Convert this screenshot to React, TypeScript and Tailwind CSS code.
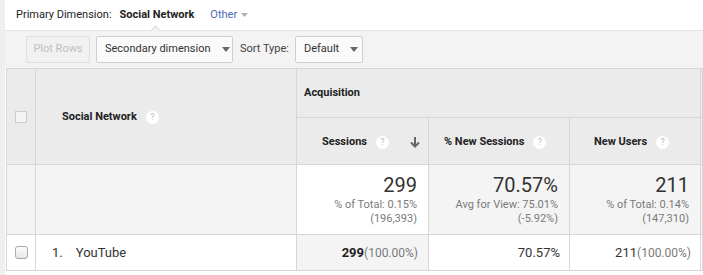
import { ReactNode } from "react";

function Help() {
  return (
    <span className="inline-flex items-center justify-center w-[13px] h-[13px] rounded-full bg-white text-[9px] leading-none text-[#bdbdbd] font-normal ml-[9px]">
      ?
    </span>
  );
}

function Caret({ color = "#666" }: { color?: string }) {
  return (
    <svg width="8" height="5" viewBox="0 0 8 5" className="ml-[11px]">
      <path d="M0 0 L8 0 L4 5 Z" fill={color} />
    </svg>
  );
}

function TotalCell({
  big,
  line1,
  line2,
  className,
}: {
  big: string;
  line1: string;
  line2: string;
  className: string;
}) {
  return (
    <div
      className={`flex flex-col items-end justify-center pr-[11px] border-r border-b border-[#d6d6d6] ${className}`}
    >
      <div className="text-[20px] leading-[22px] text-[#333] mb-[2px]">{big}</div>
      <div className="text-[11px] leading-[14px] text-[#7a7a7a]">{line1}</div>
      <div className="text-[11px] leading-[14px] text-[#7a7a7a]">{line2}</div>
    </div>
  );
}

function Cell({ children, className }: { children?: ReactNode; className: string }) {
  return <div className={`border-r border-b border-[#d6d6d6] ${className}`}>{children}</div>;
}

export default function App() {
  return (
    <div
      className="flex w-[703px] h-[275px] overflow-hidden bg-white text-[#222]"
      style={{ fontFamily: "Roboto, 'Liberation Sans', sans-serif" }}
    >
      <div className="w-[5px] shrink-0 bg-[#efefef]" />
      <div className="flex-1 flex flex-col min-w-0">
        {/* primary dimension bar */}
        <div className="h-[30px] flex items-center pl-[11px] text-[11px] shrink-0">
          <span className="text-[#222]">Primary Dimension:</span>
          <span className="ml-[8px] font-bold text-[#222]">Social Network</span>
          <span className="ml-[16px] text-[#4a6bb5]">Other</span>
          <svg width="7" height="4" viewBox="0 0 7 4" className="ml-[4px]">
            <path d="M0 0 L7 0 L3.5 4 Z" fill="#b0b0b0" />
          </svg>
        </div>

        {/* toolbar */}
        <div className="relative h-[38px] shrink-0 bg-[#f3f3f3] border-t border-[#e3e3e3] flex items-center pl-[21px] text-[11px]">
          <div className="absolute left-[147px] -top-[4px] w-[7px] h-[7px] rotate-45 bg-[#f3f3f3] border-l border-t border-[#d8d8d8]" />
          <div className="h-[27px] w-[64px] flex items-center justify-center rounded-[2px] border border-[#e0e0e0] bg-[#f1f1f1] text-[#c0c0c0]">
            Plot Rows
          </div>
          <div className="ml-[6px] h-[27px] w-[137px] pl-[8px] flex items-center rounded-[2px] border border-[#cfcfcf] bg-[#fafafa] text-[#333]">
            Secondary dimension
            <Caret />
          </div>
          <span className="ml-[7px] text-[#444]">Sort Type:</span>
          <div className="ml-[6px] h-[27px] w-[68px] pl-[8px] flex items-center rounded-[2px] border border-[#cfcfcf] bg-[#fafafa] text-[#333]">
            Default
            <Caret />
          </div>
        </div>

        {/* table */}
        <div className="grid grid-cols-[29px_261px_132px_141px_131px_1fr] grid-rows-[49px_47px_70px_36px] border-t border-l border-[#d6d6d6] text-[11px] ml-[1px]">
          <Cell className="row-span-2 bg-[#ebebeb] flex items-center justify-center">
            <div className="w-[12px] h-[12px] border border-[#cdcdcd] bg-[#f4f4f4]" />
          </Cell>
          <Cell className="row-span-2 bg-[#ebebeb] flex items-center pl-[26px] pt-[2px] font-bold text-[#222]">
            Social Network
            <Help />
          </Cell>
          <Cell className="col-span-3 bg-[#ebebeb] flex items-center pl-[7px] font-bold text-[#222]">
            Acquisition
          </Cell>
          <Cell className="bg-[#ebebeb]" />

          <Cell className="bg-[#ebebeb] flex items-center pl-[25px] pr-[8px] pt-[3px] font-bold text-[#222]">
            Sessions
            <Help />
            <svg width="10" height="11" viewBox="0 0 10 11" className="ml-auto">
              <path d="M5 0 V9 M1 5.5 L5 9.5 L9 5.5" stroke="#666" strokeWidth="2" fill="none" />
            </svg>
          </Cell>
          <Cell className="bg-[#ebebeb] flex items-center pl-[15px] pt-[3px] font-bold text-[#222]">
            % New Sessions
            <Help />
          </Cell>
          <Cell className="bg-[#ebebeb] flex items-center pl-[24px] pt-[3px] font-bold text-[#222]">
            New Users
            <Help />
          </Cell>
          <Cell className="bg-[#ebebeb]" />

          <Cell className="bg-[#f4f4f4]" />
          <Cell className="bg-[#f4f4f4]" />
          <TotalCell big="299" line1="% of Total: 0.15%" line2="(196,393)" className="bg-white" />
          <TotalCell big="70.57%" line1="Avg for View: 75.01%" line2="(-5.92%)" className="bg-[#f4f4f4]" />
          <TotalCell big="211" line1="% of Total: 0.14%" line2="(147,310)" className="bg-[#f4f4f4]" />
          <Cell className="bg-[#f4f4f4]" />

          <Cell className="bg-white flex items-center justify-center">
            <div className="w-[13px] h-[13px] rounded-[3px] border border-[#a8a8a8] bg-gradient-to-b from-[#fdfdfd] to-[#e6e6e6]" />
          </Cell>
          <Cell className="bg-white flex items-center pl-[16px] text-[13px] text-[#333]">
            <span>1.</span>
            <span className="ml-[13px]">YouTube</span>
          </Cell>
          <Cell className="bg-[#f4f4f4] flex items-center justify-end pr-[10px] text-[13px]">
            <span className="font-bold text-[#222]">299</span>
            <span className="text-[12px] text-[#7a7a7a]">(100.00%)</span>
          </Cell>
          <Cell className="bg-white flex items-center justify-end pr-[9px] text-[13px] text-[#333]">
            70.57%
          </Cell>
          <Cell className="bg-white flex items-center justify-end pr-[9px] text-[13px]">
            <span className="text-[#333]">211</span>
            <span className="text-[12px] text-[#7a7a7a]">(100.00%)</span>
          </Cell>
          <Cell className="bg-white" />
        </div>
      </div>
    </div>
  );
}
